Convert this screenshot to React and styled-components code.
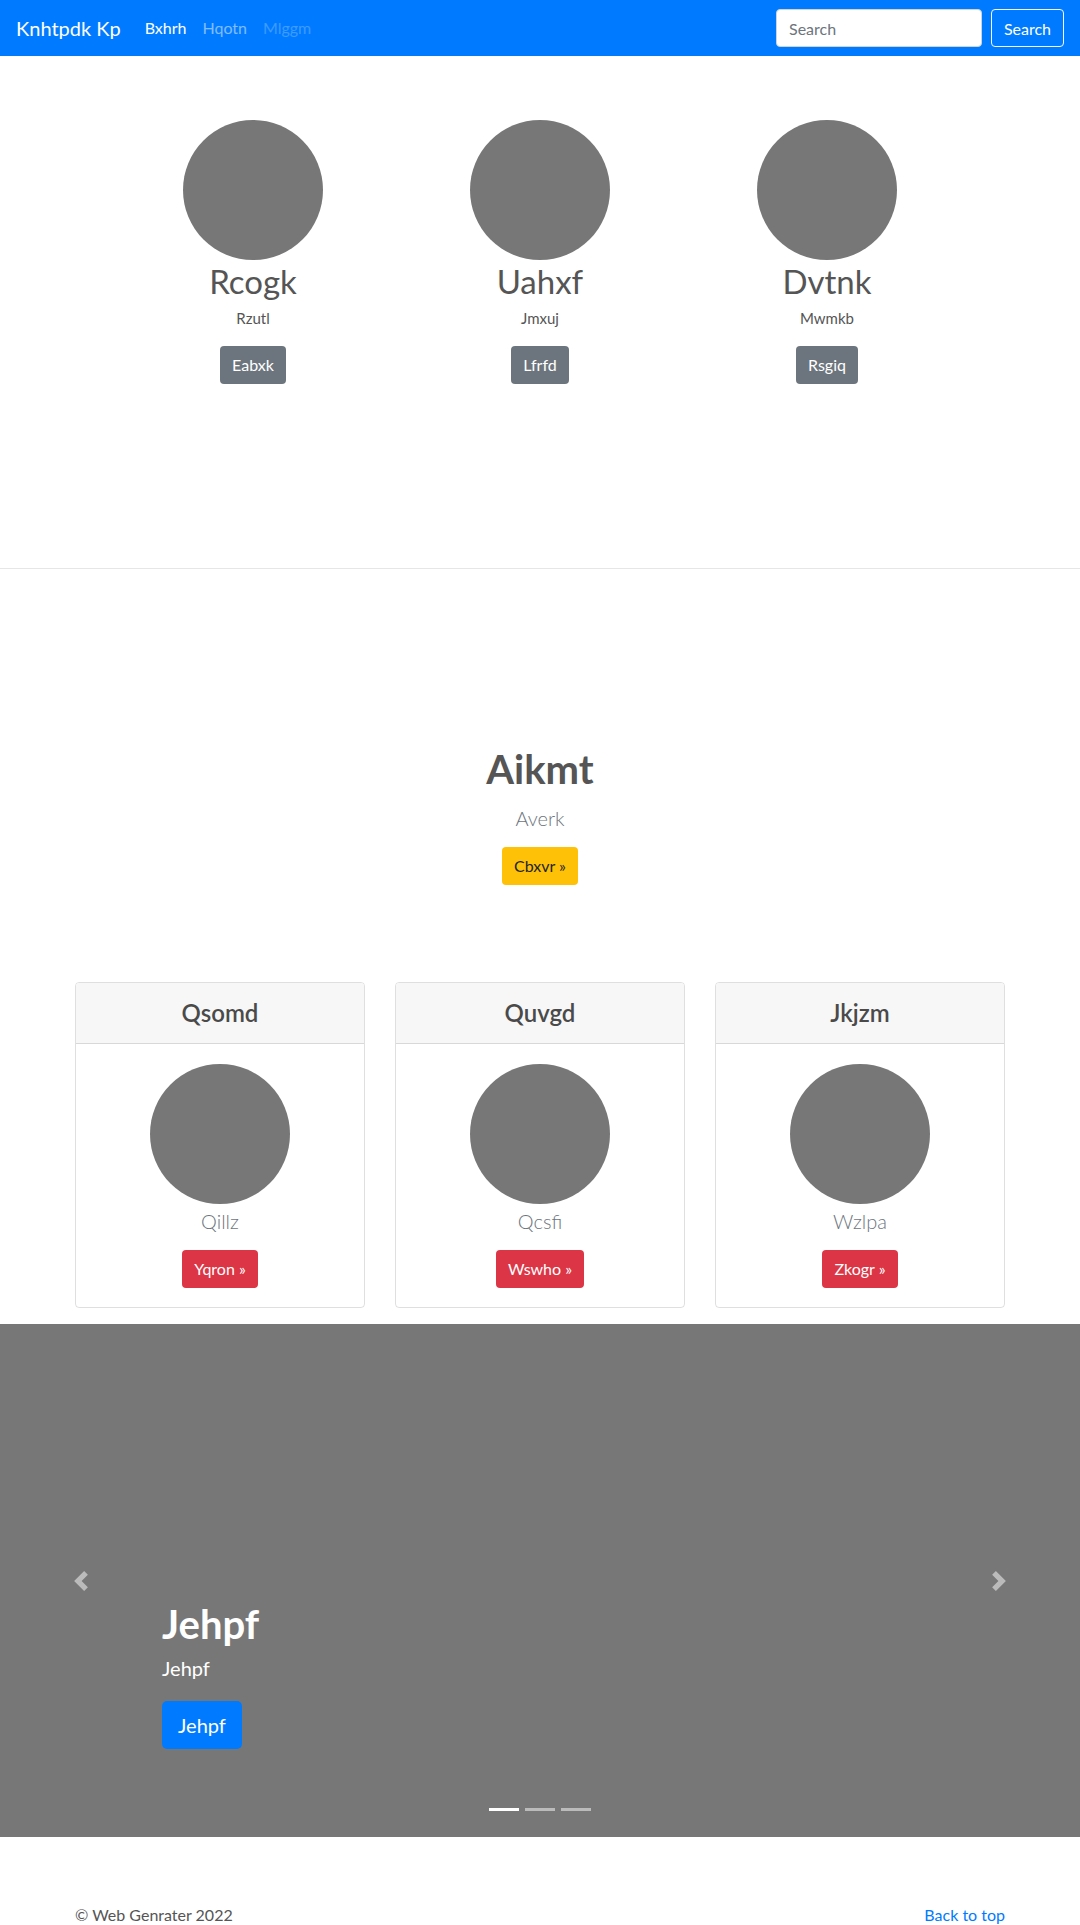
import React from "react";
import styled, { createGlobalStyle, css } from "styled-components";

const GlobalStyle = createGlobalStyle`
  * { box-sizing: border-box; }
  body {
    margin: 0;
    font-family: Lato, "Noto Sans", sans-serif;
    color: #212529;
    background: #fff;
  }
`;

const Navbar = styled.nav`
  display: flex;
  align-items: center;
  height: 56px;
  padding: 0 16px;
  background: #007bff;
`;

const Brand = styled.a`
  font-size: 20px;
  line-height: 30px;
  color: #fff;
  margin-right: 16px;
  text-decoration: none;
`;

const NavList = styled.div`
  display: flex;
`;

const NavLink = styled.a`
  font-size: 16px;
  line-height: 24px;
  padding: 8px;
  text-decoration: none;
  color: ${(p) =>
    p.$state === "active"
      ? "#fff"
      : p.$state === "disabled"
      ? "rgba(255,255,255,0.25)"
      : "rgba(255,255,255,0.5)"};
`;

const SearchForm = styled.form`
  margin-left: auto;
  display: flex;
  gap: 9px;
`;

const SearchInput = styled.input`
  width: 206px;
  height: 38px;
  padding: 6px 12px;
  font: 16px Lato, "Noto Sans", sans-serif;
  border: 1px solid #ced4da;
  border-radius: 4px;
  color: #495057;
  &::placeholder { color: #6c757d; }
`;

const OutlineButton = styled.button`
  width: 73px;
  height: 38px;
  padding: 6px 0;
  font: 16px Lato, "Noto Sans", sans-serif;
  color: #fff;
  background: transparent;
  border: 1px solid #f8f9fa;
  border-radius: 4px;
`;

const variants = {
  secondary: css`background: #6c757d; color: #fff;`,
  warning: css`background: #ffc107; color: #212529;`,
  danger: css`background: #dc3545; color: #fff;`,
  primary: css`background: #007bff; color: #fff;`,
};

const Button = styled.a`
  display: inline-block;
  border-radius: ${(p) => (p.$size === "lg" ? "5px" : "4px")};
  font-size: ${(p) => (p.$size === "lg" ? "20px" : "16px")};
  line-height: ${(p) => (p.$size === "lg" ? "30px" : "24px")};
  padding: ${(p) => (p.$size === "lg" ? "9px 16px" : "7px 12px")};
  text-decoration: none;
  ${(p) => variants[p.$variant]}
`;

const TopSection = styled.section`
  padding: 64px 0 184px;
`;

const FeatureRow = styled.div`
  width: 861px;
  margin: 0 auto;
  display: grid;
  grid-template-columns: repeat(3, 1fr);
`;

const Feature = styled.div`
  display: flex;
  flex-direction: column;
  align-items: center;
`;

const Avatar = styled.div`
  width: 140px;
  height: 140px;
  border-radius: 50%;
  background: #777;
`;

const FeatureName = styled.h2`
  margin: 0 0 3px;
  font-size: 33px;
  line-height: 43px;
  font-weight: 400;
  color: #555;
`;

const FeatureText = styled.p`
  margin: 0 0 16px;
  font-size: 15px;
  line-height: 24px;
  color: #555;
`;

const Divider = styled.hr`
  margin: 0;
  border: 0;
  border-top: 1px solid #e6e6e6;
`;

const Hero = styled.section`
  padding-top: 176px;
  display: flex;
  flex-direction: column;
  align-items: center;
`;

const HeroTitle = styled.h1`
  margin: 0 0 10px;
  font-size: 40px;
  line-height: 48px;
  font-weight: 700;
  color: #555;
`;

const Lead = styled.p`
  margin: 0 0 14px;
  font-size: 20px;
  line-height: 30px;
  font-weight: 300;
  color: #6c757d;
`;

const CardGrid = styled.div`
  width: 930px;
  margin: 97px auto 0;
  display: grid;
  grid-template-columns: repeat(3, 1fr);
  gap: 30px;
`;

const Card = styled.div`
  border: 1px solid rgba(0, 0, 0, 0.125);
  border-radius: 4px;
  overflow: hidden;
`;

const CardHeader = styled.div`
  padding: 12px 20px;
  background: #f7f7f7;
  border-bottom: 1px solid rgba(0, 0, 0, 0.125);
  text-align: center;
`;

const CardTitle = styled.h4`
  margin: 0;
  font-size: 24px;
  line-height: 36px;
  font-weight: 600;
  color: #4a4a4a;
`;

const CardBody = styled.div`
  padding: 20px 20px 19px;
  display: flex;
  flex-direction: column;
  align-items: center;
`;

const CardText = styled.p`
  margin: 2px 0 14px;
  font-size: 20px;
  line-height: 30px;
  font-weight: 300;
  color: #6c757d;
`;

const Carousel = styled.section`
  position: relative;
  margin-top: 16px;
  height: 513px;
  background: #777;
  display: flex;
  flex-direction: column;
  justify-content: flex-end;
  padding: 0 162px 88px;
  color: #fff;
`;

const CaptionTitle = styled.h1`
  margin: 0 0 5px;
  font-size: 40px;
  line-height: 48px;
  font-weight: 700;
`;

const CaptionText = styled.p`
  margin: 0 0 18px;
  font-size: 20px;
  line-height: 30px;
`;

const CaptionAction = styled.div`
  display: flex;
`;

const Control = styled.a`
  position: absolute;
  top: 0;
  bottom: 0;
  ${(p) => (p.$side === "prev" ? "left: 0;" : "right: 0;")}
  width: 15%;
  display: flex;
  align-items: center;
  justify-content: center;
  opacity: 0.5;
  svg { width: 20px; height: 20px; display: block; }
`;

const Indicators = styled.ol`
  position: absolute;
  left: 0;
  right: 0;
  bottom: 0;
  margin: 0 0 16px;
  padding: 0;
  list-style: none;
  display: flex;
  justify-content: center;
`;

const Indicator = styled.li`
  width: 30px;
  height: 3px;
  margin: 10px 3px;
  background: ${(p) => (p.$active ? "#fff" : "rgba(255,255,255,0.5)")};
`;

const Footer = styled.footer`
  width: 930px;
  margin: 0 auto;
  padding: 66px 0 24px;
  display: flex;
  justify-content: space-between;
  font-size: 16px;
  line-height: 24px;
  color: #555;
`;

const FooterLink = styled.a`
  color: #007bff;
  text-decoration: none;
`;

const features = [
  { name: "Rcogk", text: "Rzutl", btn: "Eabxk" },
  { name: "Uahxf", text: "Jmxuj", btn: "Lfrfd" },
  { name: "Dvtnk", text: "Mwmkb", btn: "Rsgiq" },
];

const cards = [
  { title: "Qsomd", text: "Qillz", btn: "Yqron »" },
  { title: "Quvgd", text: "Qcsfi", btn: "Wswho »" },
  { title: "Jkjzm", text: "Wzlpa", btn: "Zkogr »" },
];

export default function App() {
  return (
    <>
      <GlobalStyle />
      <Navbar>
        <Brand href="#">Knhtpdk Kp</Brand>
        <NavList>
          <NavLink $state="active" href="#">Bxhrh</NavLink>
          <NavLink href="#">Hqotn</NavLink>
          <NavLink $state="disabled" href="#">Mlggm</NavLink>
        </NavList>
        <SearchForm onSubmit={(e) => e.preventDefault()}>
          <SearchInput placeholder="Search" />
          <OutlineButton type="submit">Search</OutlineButton>
        </SearchForm>
      </Navbar>

      <TopSection>
        <FeatureRow>
          {features.map((f) => (
            <Feature key={f.name}>
              <Avatar />
              <FeatureName>{f.name}</FeatureName>
              <FeatureText>{f.text}</FeatureText>
              <Button $variant="secondary" href="#">{f.btn}</Button>
            </Feature>
          ))}
        </FeatureRow>
      </TopSection>
      <Divider />

      <Hero>
        <HeroTitle>Aikmt</HeroTitle>
        <Lead>Averk</Lead>
        <Button $variant="warning" href="#">Cbxvr »</Button>
      </Hero>

      <CardGrid>
        {cards.map((c) => (
          <Card key={c.title}>
            <CardHeader>
              <CardTitle>{c.title}</CardTitle>
            </CardHeader>
            <CardBody>
              <Avatar />
              <CardText>{c.text}</CardText>
              <Button $variant="danger" href="#">{c.btn}</Button>
            </CardBody>
          </Card>
        ))}
      </CardGrid>

      <Carousel>
        <CaptionTitle>Jehpf</CaptionTitle>
        <CaptionText>Jehpf</CaptionText>
        <CaptionAction>
          <Button $variant="primary" $size="lg" href="#">Jehpf</Button>
        </CaptionAction>
        <Control $side="prev" href="#">
          <svg viewBox="0 0 8 8" fill="#fff">
            <path d="M5.25 0l-4 4 4 4 1.5-1.5L4.25 4l2.5-2.5L5.25 0z" />
          </svg>
        </Control>
        <Control $side="next" href="#">
          <svg viewBox="0 0 8 8" fill="#fff">
            <path d="M2.75 0l-1.5 1.5L3.75 4l-2.5 2.5L2.75 8l4-4-4-4z" />
          </svg>
        </Control>
        <Indicators>
          <Indicator $active />
          <Indicator />
          <Indicator />
        </Indicators>
      </Carousel>

      <Footer>
        <span>© Web Genrater 2022</span>
        <FooterLink href="#">Back to top</FooterLink>
      </Footer>
    </>
  );
}
